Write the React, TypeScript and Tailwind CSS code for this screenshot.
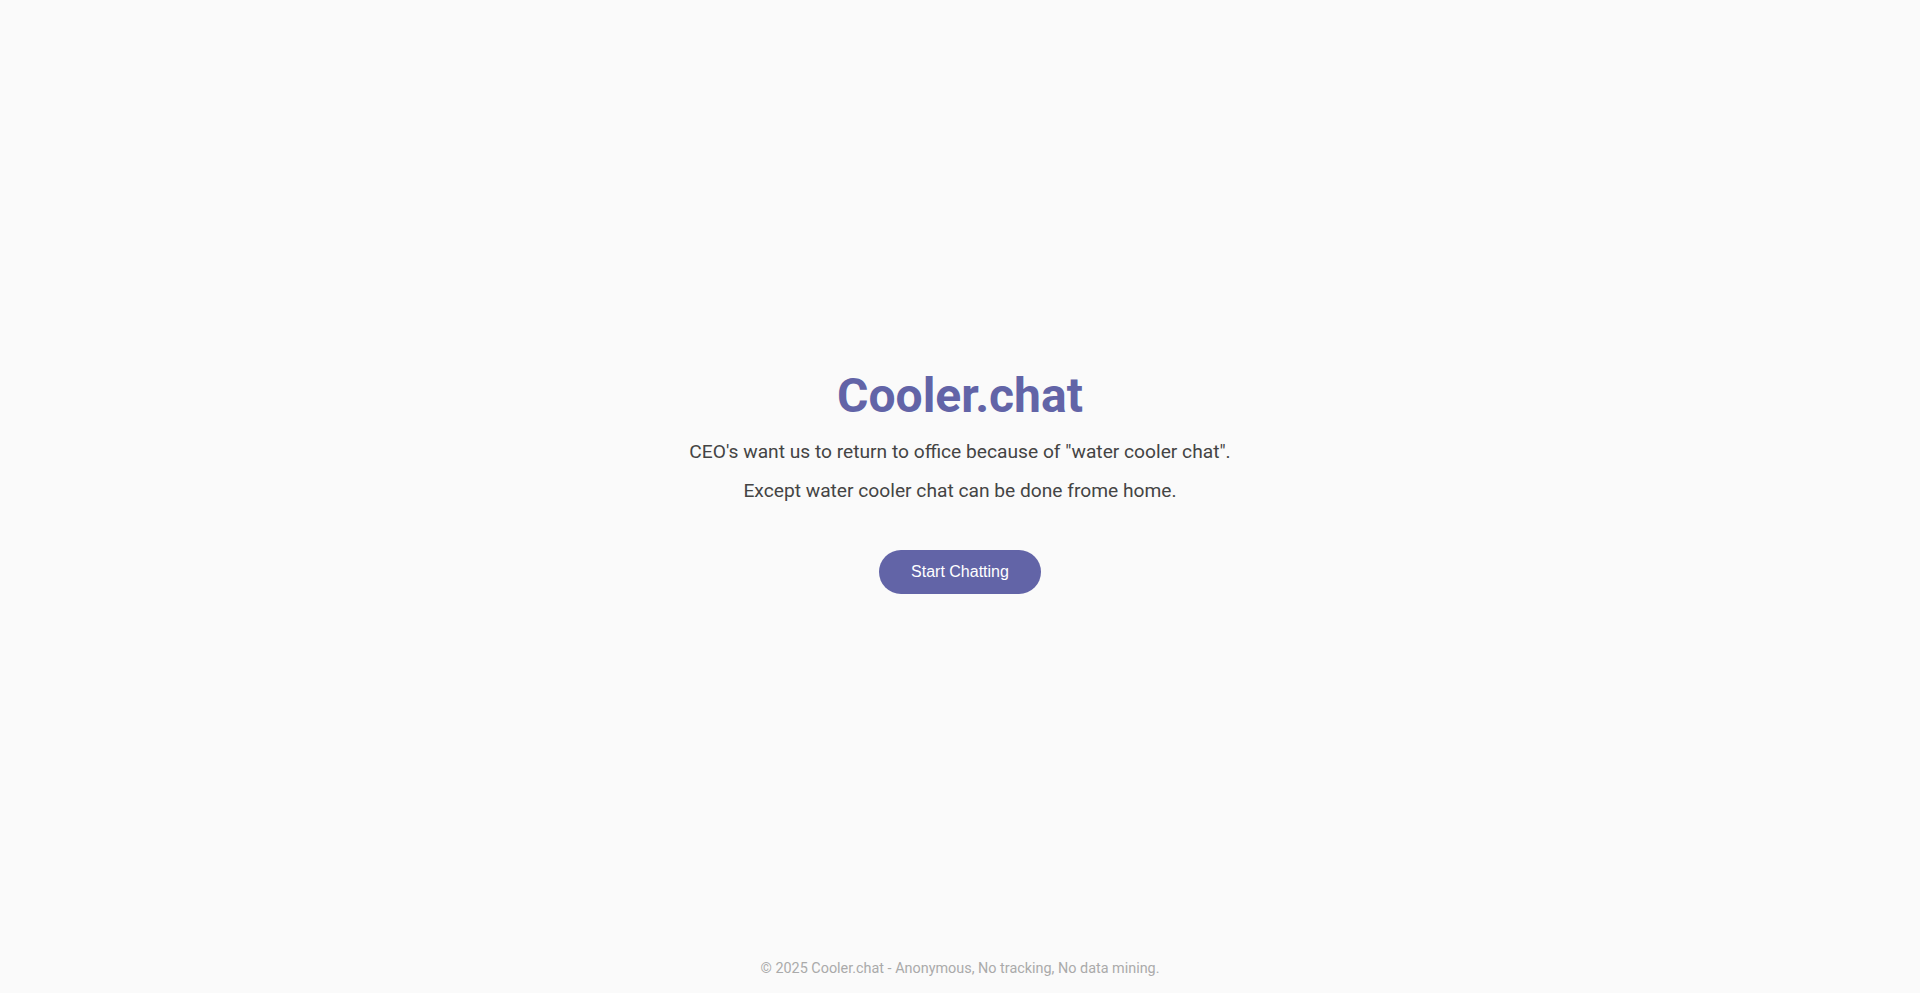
export default function App() {
  return (
    <div className="min-h-screen flex flex-col bg-[#fafafa]" style={{ fontFamily: "Roboto, 'Noto Sans', sans-serif" }}>
      <main className="flex-1 flex flex-col items-center justify-center text-center pt-[22px]">
        <h1 className="text-[48px] font-bold text-[#6264a7] leading-[1.2] mb-[13px]">Cooler.chat</h1>
        <p className="text-[19.2px] text-[#444] leading-[1.5] mb-[11px]">CEO's want us to return to office because of "water cooler chat".</p>
        <p className="text-[19.2px] text-[#444] leading-[1.5]">Except water cooler chat can be done frome home.</p>
        <button className="mt-[44px] h-[44px] px-8 rounded-full bg-[#6264a7] text-white text-[16px]" style={{ fontFamily: "'Liberation Sans', Arial, sans-serif" }}>Start Chatting</button>
      </main>
      <footer className="pt-[19px] pb-[13px] text-center text-[14.4px] text-[#aaa]">© 2025 Cooler.chat - Anonymous, No tracking, No data mining.</footer>
    </div>
  );
}
